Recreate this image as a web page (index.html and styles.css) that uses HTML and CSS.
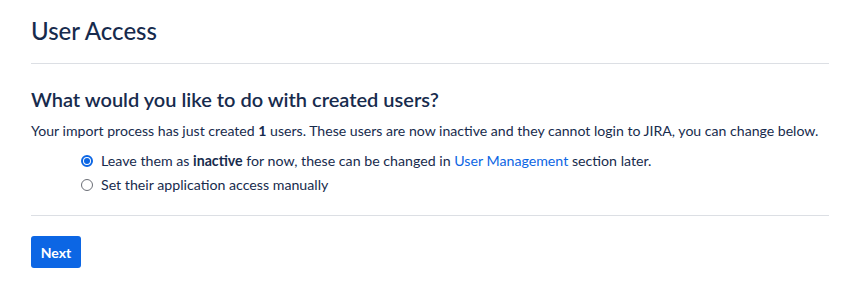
FILE: index.html
```html
<!DOCTYPE html>
<html>
<head>
<meta charset="utf-8">
<link rel="stylesheet" href="styles.css">
</head>
<body>
<div class="page">
  <h1 class="title">User Access</h1>
  <hr class="divider">
  <section class="section">
    <h2 class="subtitle">What would you like to do with created users?</h2>
    <p class="desc">Your import process has just created <b>1</b> users. These users are now inactive and they cannot login to JIRA, you can change below.</p>
    <div class="options">
      <label class="option"><span class="radio checked"></span><span>Leave them as <b>inactive</b> for now, these can be changed in <a class="link" href="#">User Management</a> section later.</span></label>
      <label class="option"><span class="radio"></span><span>Set their application access manually</span></label>
    </div>
  </section>
  <hr class="divider">
  <div class="actions"><button class="btn">Next</button></div>
</div>
</body>
</html>
```
FILE: styles.css
```css
html, body { margin: 0; padding: 0; background: #fff; }
body { font-family: "Lato", "Noto Sans", sans-serif; color: #172b4d; }
.page { padding: 0 23px 0 31px; }
.title { margin: 0; padding-top: 16px; font-size: 24px; font-weight: 500; line-height: 30px; height: 30px; }
.divider { border: 0; height: 1px; background: #dcdfe4; margin: 17px 0 0; }
.section { padding-top: 23px; padding-bottom: 3px; }
.subtitle { margin: 0; font-size: 20px; font-weight: 600; line-height: 24px; }
.desc { margin: 10px 0 0; font-size: 14.1px; line-height: 20px; }
.options { padding-left: 50px; margin-top: 10px; display: flex; flex-direction: column; gap: 4px; }
.option { display: flex; align-items: center; gap: 8px; font-size: 14.2px; line-height: 20px; }
.radio { width: 12px; height: 12px; border: 1px solid #6b6e76; border-radius: 50%; box-sizing: border-box; flex: none; position: relative; }
.radio.checked { border: 2px solid #0c66e4; background: #fff; }
.radio.checked::after { content: ""; position: absolute; left: 1px; top: 1px; width: 6px; height: 6px; border-radius: 50%; background: #0c66e4; }
.link { color: #0c66e4; text-decoration: none; }
.actions { padding-top: 20px; }
.btn { background: #0c66e4; color: #fff; border: 0; border-radius: 3px; height: 32px; width: 50px; padding: 0; font-family: inherit; font-size: 14px; font-weight: 700; }
```
